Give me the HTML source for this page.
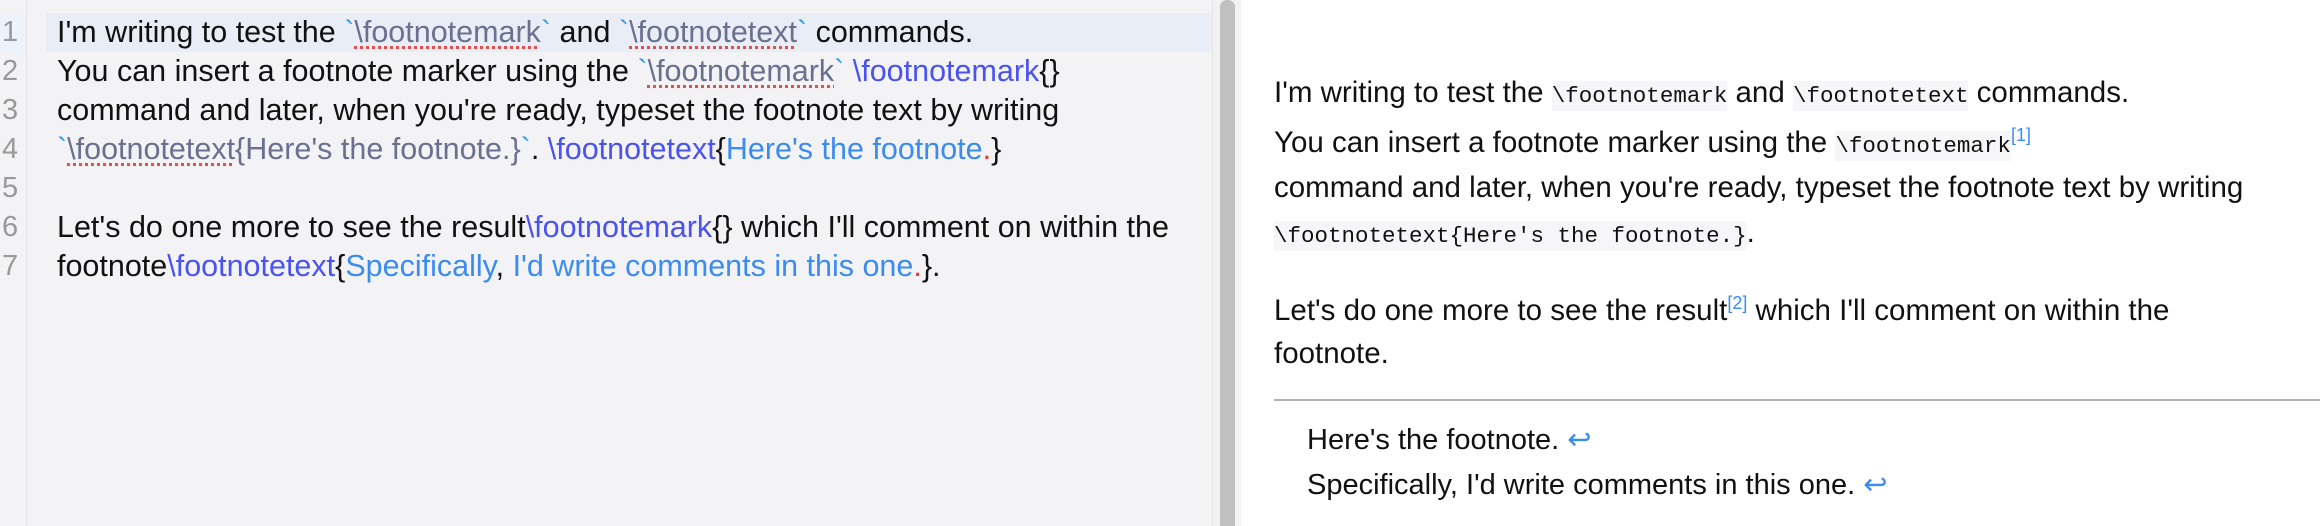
<!DOCTYPE html>
<html><head><style>
body{margin:0;width:2320px;height:526px;overflow:hidden;font-family:"Liberation Sans",sans-serif;background:#fff;position:relative}
.ed{position:absolute;left:0;top:0;width:1212px;height:526px;background:#f3f3f5}
.gut{position:absolute;left:0;top:0;width:26px;height:526px;border-right:1px solid #e4e4e8}
.hl{position:absolute;left:46px;top:13px;width:1166px;height:39px;background:#e9eef6}
.hlg{position:absolute;left:0;top:13px;width:26px;height:39px;background:#eef3fb}
.ln{position:absolute;left:2px;font-size:29px;color:#999;line-height:39px}
.l{position:absolute;left:57px;font-size:30.5px;color:#111;white-space:nowrap;line-height:39px}
.g{color:#6a7090}.b{color:#4a52f0}.c{color:#3b8cf0}.bt{color:#2a9af0}.r{color:#e33}
.u{text-decoration:underline dotted #e05050;text-underline-offset:4px}
.trk{position:absolute;left:1212px;top:0;width:28px;height:526px;background:#f2f2f2;border-left:1px solid #e6e6e6}
.th{position:absolute;left:1220px;top:0;width:15px;height:526px;background:#c0c0c0;border-radius:7px 7px 0 0}
.p{position:absolute;left:1274px;font-size:29.5px;color:#111;white-space:nowrap}
code{font-family:"Liberation Mono",monospace;font-size:22.5px;background:#f6f6f8;padding:2px 0}
sup{color:#3b8cf0;font-size:18px}
.hr{position:absolute;left:1274px;top:399px;width:1046px;height:2px;background:#b0b0b0}
.ar{color:#3b8cf0}
.f{font-size:29px}
</style></head><body>
<div class="ed">
<div class="gut"></div><div class="hlg"></div><div class="hl"></div>
<div class="ln" style="top:13px">1</div><div class="ln" style="top:52px">2</div><div class="ln" style="top:91px">3</div><div class="ln" style="top:130px">4</div><div class="ln" style="top:169px">5</div><div class="ln" style="top:208px">6</div><div class="ln" style="top:247px">7</div>
<div class="l" style="top:13px">I'm writing to test the <span class="bt">`</span><span class="g u">\footnotemark</span><span class="bt">`</span> and <span class="bt">`</span><span class="g u">\footnotetext</span><span class="bt">`</span> commands.</div>
<div class="l" style="top:52px">You can insert a footnote marker using the <span class="bt">`</span><span class="g u">\footnotemark</span><span class="bt">`</span> <span class="b">\footnotemark</span>{}</div>
<div class="l" style="top:91px">command and later, when you're ready, typeset the footnote text by writing</div>
<div class="l" style="top:130px"><span class="bt">`</span><span class="g"><span class="u">\footnotetext</span>{Here's the footnote.}</span><span class="bt">`</span>. <span class="b">\footnotetext</span>{<span class="c">Here's the footnote</span><span class="r">.</span>}</div>
<div class="l" style="top:208px">Let's do one more to see the result<span class="b">\footnotemark</span>{} which I'll comment on within the</div>
<div class="l" style="top:247px">footnote<span class="b">\footnotetext</span>{<span class="c">Specifically</span>, <span class="c">I'd write comments in this one</span><span class="r">.</span>}.</div>
</div>
<div class="trk"></div><div class="th"></div>
<div class="p" style="top:76px">I'm writing to test the <code>\footnotemark</code> and <code>\footnotetext</code> commands.</div>
<div class="p" style="top:125px">You can insert a footnote marker using the <code>\footnotemark</code><sup>[1]</sup></div>
<div class="p" style="top:171px">command and later, when you're ready, typeset the footnote text by writing</div>
<div class="p" style="top:216px"><code>\footnotetext{Here's the footnote.}</code>.</div>
<div class="p" style="top:293px">Let's do one more to see the result<sup>[2]</sup> which I'll comment on within the</div>
<div class="p" style="top:337px">footnote.</div>
<div class="hr"></div>
<div class="p f" style="left:1307px;top:422px">Here's the footnote. <span class="ar">↩</span></div>
<div class="p f" style="left:1307px;top:467px">Specifically, I'd write comments in this one. <span class="ar">↩</span></div>
</body></html>
